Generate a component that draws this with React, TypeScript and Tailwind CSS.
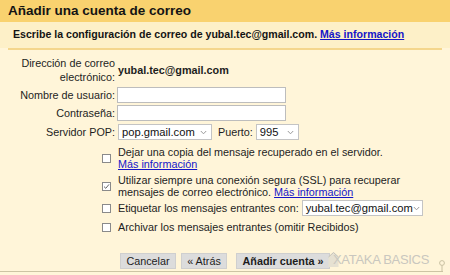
import React from "react";

const Box = ({ checked = false }: { checked?: boolean }) => (
  <span className="inline-flex w-[9px] h-[9px] border border-[#8a8a8a] bg-white items-center justify-center">
    {checked && (
      <svg width="7" height="7" viewBox="0 0 7 7">
        <path d="M1 3.6 L2.8 5.3 L6 1.4" stroke="#555" strokeWidth="0.9" fill="none" />
      </svg>
    )}
  </span>
);

const Chevron = () => (
  <svg width="7" height="5" viewBox="0 0 7 5" className="shrink-0">
    <path d="M0.8 1 L3.5 3.8 L6.2 1" stroke="#9a9a9a" strokeWidth="1" fill="none" />
  </svg>
);

const Select = ({ value, w }: { value: string; w: string }) => (
  <div className={`${w} h-[16px] bg-white border border-[#c4c4c4] flex items-center justify-between pl-[3px] pr-[4px] text-[11.2px] text-[#111]`}>
    <span>{value}</span>
    <Chevron />
  </div>
);

const Link = ({ children }: { children: React.ReactNode }) => (
  <span className="text-[#1515c8] underline">{children}</span>
);

export default function App() {
  return (
    <div className="w-[450px] h-[275px] overflow-hidden relative bg-[#fff5d9] font-['Liberation_Sans',Arial,sans-serif] text-[#1d1d1d] flex flex-col">
      <div className="h-[22px] shrink-0 bg-[#f9d26f] pl-[8px] flex items-center text-[13.5px] font-bold text-[#141414]">
        Añadir una cuenta de correo
      </div>
      <div className="h-[26px] shrink-0 bg-[#fdf0c8] pl-[13px] flex items-center text-[10.6px] font-bold text-[#141414]">
        Escribe la configuración de correo de yubal.tec@gmail.com.&nbsp;<Link>Más información</Link>
      </div>
      <div className="mx-[8px] h-[2px] shrink-0 bg-[#f4d68c]" />

      <div className="flex flex-col text-[10.8px] leading-[14px]">
        <div className="flex items-center mt-[6px]">
          <div className="w-[115px] text-right">Dirección de correo<br />electrónico:</div>
          <div className="ml-[3px] font-bold">yubal.tec@gmail.com</div>
        </div>
        <div className="flex items-center mt-[3px]">
          <div className="w-[115px] text-right">Nombre de usuario:</div>
          <div className="ml-[2px] w-[169px] h-[16px] bg-white border border-[#bdbdbd]" />
        </div>
        <div className="flex items-center mt-[2px]">
          <div className="w-[115px] text-right">Contraseña:</div>
          <div className="ml-[2px] w-[169px] h-[16px] bg-white border border-[#bdbdbd]" />
        </div>
        <div className="flex items-center mt-[3px]">
          <div className="w-[115px] text-right">Servidor POP:</div>
          <div className="ml-[3px]"><Select value="pop.gmail.com" w="w-[94px]" /></div>
          <div className="ml-[6px] mr-[3px]">Puerto:</div>
          <Select value="995" w="w-[43px]" />
        </div>

        <div className="flex items-center mt-[7px] leading-[11.5px]">
          <div className="w-[115px] flex justify-end pr-[4px]"><Box /></div>
          <div className="ml-[3px]">Dejar una copia del mensaje recuperado en el servidor.<br /><Link>Más información</Link></div>
        </div>
        <div className="flex items-center mt-[5px] leading-[11.5px]">
          <div className="w-[115px] flex justify-end pr-[4px]"><Box checked /></div>
          <div className="ml-[3px]">Utilizar siempre una conexión segura (SSL) para recuperar<br />mensajes de correo electrónico. <Link>Más información</Link></div>
        </div>
        <div className="flex items-center mt-[2px]">
          <div className="w-[115px] flex justify-end pr-[4px]"><Box /></div>
          <div className="ml-[3px] mr-[3px]">Etiquetar los mensajes entrantes con:</div>
          <Select value="yubal.tec@gmail.com" w="w-[121px]" />
        </div>
        <div className="flex items-center mt-[4px]">
          <div className="w-[115px] flex justify-end pr-[4px]"><Box /></div>
          <div className="ml-[3px]">Archivar los mensajes entrantes (omitir Recibidos)</div>
        </div>

        <div className="flex items-center mt-[19px] ml-[120px] gap-[5px]">
          <div className="h-[16px] w-[56px] bg-[#dcdcdc] border border-[#cfcfcf] flex items-center justify-center">Cancelar</div>
          <div className="h-[16px] w-[46px] bg-[#dcdcdc] border border-[#cfcfcf] flex items-center justify-center">« Atrás</div>
          <div className="ml-[4px] h-[16px] w-[94px] bg-[#dcdcdc] border border-[#cfcfcf] flex items-center justify-center font-bold">Añadir cuenta »</div>
        </div>
      </div>

      <div className="mt-auto mb-[3px] w-[443px] h-[1px] bg-[#cdc4a4]" />

      <div className="absolute left-[328px] top-[251px]">
        <svg width="11" height="17" viewBox="0 0 11 17" className="absolute left-0 top-0">
          <path d="M0.5 6 L5.5 1.5 L10.5 6 L10.5 16 L0.5 16 Z" fill="#e6e1d2" />
          <path d="M0.5 6 L5.5 1.5 L10.5 6" stroke="#c4c1b8" strokeWidth="1" fill="none" />
        </svg>
        <span className="relative block text-[13px] tracking-[-0.3px] text-[#c9c7bf] ml-[5px] mt-[1px] leading-[15px]">XATAKA BASICS</span>
      </div>
      <svg width="8" height="12" viewBox="0 0 8 12" className="absolute left-[438px] top-[260px]">
        <circle cx="4" cy="3" r="2.4" fill="none" stroke="#c9c1a2" strokeWidth="1" />
        <path d="M4 5.4 L4 12" stroke="#c9c1a2" strokeWidth="1" />
      </svg>
    </div>
  );
}
